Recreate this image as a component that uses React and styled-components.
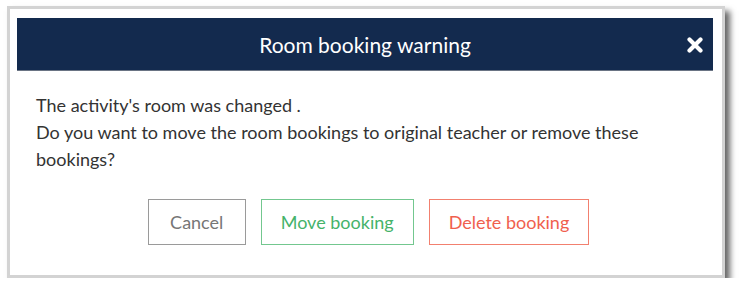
import React from "react";
import styled, { createGlobalStyle } from "styled-components";

const Global = createGlobalStyle`
  html, body { margin: 0; padding: 0; background: #ffffff; }
  body { font-family: Lato, "Open Sans", sans-serif; }
  * { box-sizing: border-box; }
`;

const Frame = styled.div`
  margin: 6px 0 0 7px;
  width: 718px;
  height: 272px;
  border: 3px solid #d3d3d3;
  background: #ffffff;
  box-shadow: 5px 5px 6px rgba(0, 0, 0, 0.6);
  padding: 9px 9px 0 7px;
  display: flex;
  flex-direction: column;
`;

const Header = styled.div`
  height: 53px;
  background: #132a4e;
  border-bottom: 1px solid #6a7484;
  display: flex;
  align-items: center;
  justify-content: center;
  position: relative;
  color: #ffffff;
`;

const Title = styled.h2`
  margin: 0;
  font-family: Lato, sans-serif;
  font-weight: 400;
  font-size: 21px;
  line-height: 1;
`;

const Close = styled.button`
  position: absolute;
  right: 10px;
  top: 19px;
  width: 16px;
  height: 16px;
  padding: 0;
  border: 0;
  background: transparent;
  cursor: pointer;
  display: flex;
`;

const Body = styled.div`
  padding: 21px 19px 0 19px;
  color: #333333;
  font-size: 18px;
  line-height: 27px;
`;

const Message = styled.p`
  margin: 0;
`;

const Actions = styled.div`
  display: flex;
  justify-content: center;
  gap: 15px;
  padding: 26px 0 0 7px;
`;

const tones = {
  neutral: { color: "#767676", border: "#9a9a9a" },
  success: { color: "#45b36a", border: "#73c78f" },
  danger: { color: "#f0604e", border: "#f2806f" },
};

const Button = styled.button`
  height: 46px;
  min-width: 98px;
  padding: 0 19px;
  background: #ffffff;
  border: 1px solid ${(p) => tones[p.$tone].border};
  color: ${(p) => tones[p.$tone].color};
  font-family: Lato, sans-serif;
  font-size: 18px;
  cursor: pointer;
  border-radius: 0;
`;

const CloseIcon = () => (
  <svg width="16" height="16" viewBox="0 0 16 16">
    <path
      d="M2.5 2.5 L13.5 13.5 M13.5 2.5 L2.5 13.5"
      stroke="#ffffff"
      strokeWidth="4.2"
      strokeLinecap="round"
    />
  </svg>
);

export default function App() {
  return (
    <>
      <Global />
      <Frame>
        <Header>
          <Title>Room booking warning</Title>
          <Close aria-label="Close">
            <CloseIcon />
          </Close>
        </Header>
        <Body>
          <Message>The activity's room was changed .</Message>
          <Message>
            Do you want to move the room bookings to original teacher or remove
            these bookings?
          </Message>
          <Actions>
            <Button $tone="neutral">Cancel</Button>
            <Button $tone="success">Move booking</Button>
            <Button $tone="danger">Delete booking</Button>
          </Actions>
        </Body>
      </Frame>
    </>
  );
}
